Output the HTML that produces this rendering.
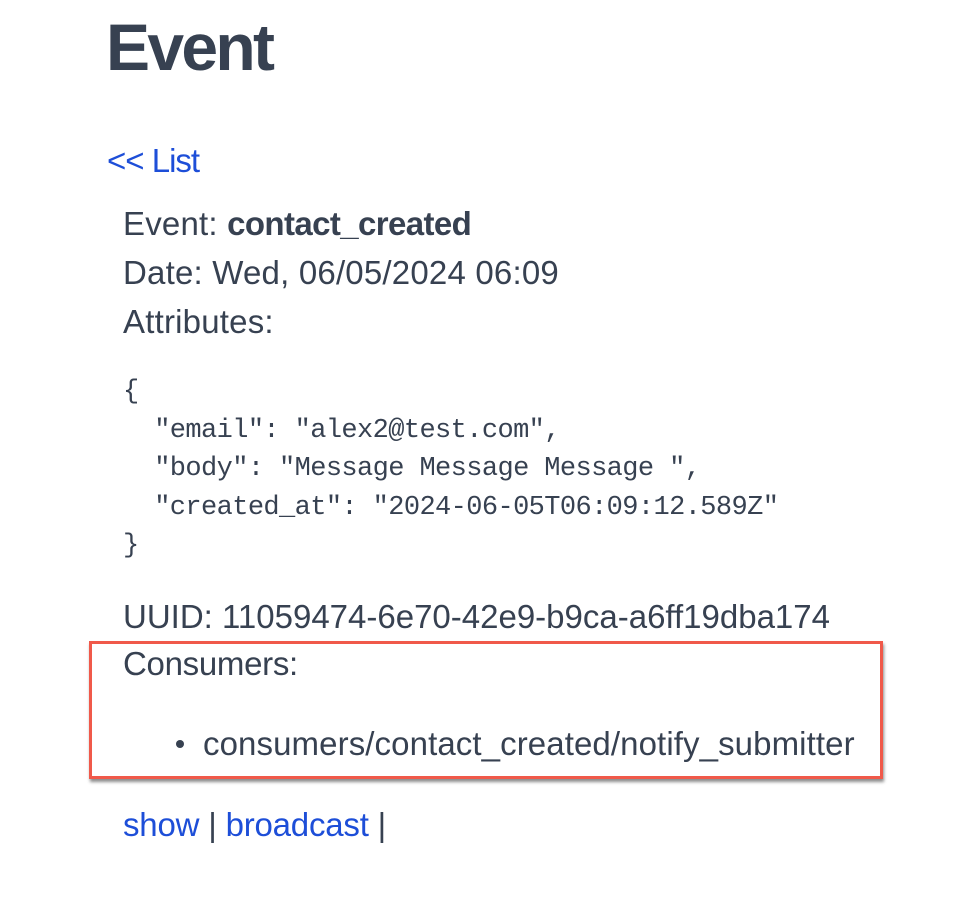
<!DOCTYPE html>
<html><head><meta charset="utf-8"><style>
html,body{margin:0;padding:0;background:#fff;width:972px;height:906px;overflow:hidden;position:relative}
div{position:absolute;white-space:pre;line-height:1;color:#374151;font-family:"Liberation Sans",sans-serif}
.b{font-size:33px;letter-spacing:0.2px}
.m{font-family:"Liberation Mono",monospace;font-size:27px;letter-spacing:-0.6px;left:123px}
a{color:#1d4ed8;text-decoration:none}
</style></head><body>
<div style="left:106px;top:14px;font-size:66px;font-weight:bold;letter-spacing:-2.7px">Event</div>
<div class="b" style="left:107px;top:144px;letter-spacing:-1px"><a>&lt;&lt; List</a></div>
<div class="b" style="left:123px;top:207px">Event: <b style="letter-spacing:-0.6px">contact_created</b></div>
<div class="b" style="left:123px;top:256px">Date: Wed, 06/05/2024 06:09</div>
<div class="b" style="left:123px;top:305px">Attributes:</div>
<div class="m" style="top:379px">{</div>
<div class="m" style="top:418px">  "email": "alex2@test.com",</div>
<div class="m" style="top:456px">  "body": "Message Message Message ",</div>
<div class="m" style="top:495px">  "created_at": "2024-06-05T06:09:12.589Z"</div>
<div class="m" style="top:533px">}</div>
<div class="b" style="left:123px;top:600px;letter-spacing:0">UUID: 11059474-6e70-42e9-b9ca-a6ff19dba174</div>
<div style="left:89px;top:641px;width:788px;height:132px;border:3px solid #f0594a;box-shadow:1px 3px 3px rgba(0,0,0,0.45)"></div>
<div class="b" style="left:123px;top:647px;letter-spacing:-0.3px">Consumers:</div>
<div style="left:176px;top:740px;width:8px;height:8px;border-radius:50%;background:#374151"></div>
<div class="b" style="left:203px;top:727px;letter-spacing:0.1px">consumers/contact_created/notify_submitter</div>
<div class="b" style="left:123px;top:808px;letter-spacing:-0.2px"><a>show</a> | <a>broadcast</a> |</div>
</body></html>
